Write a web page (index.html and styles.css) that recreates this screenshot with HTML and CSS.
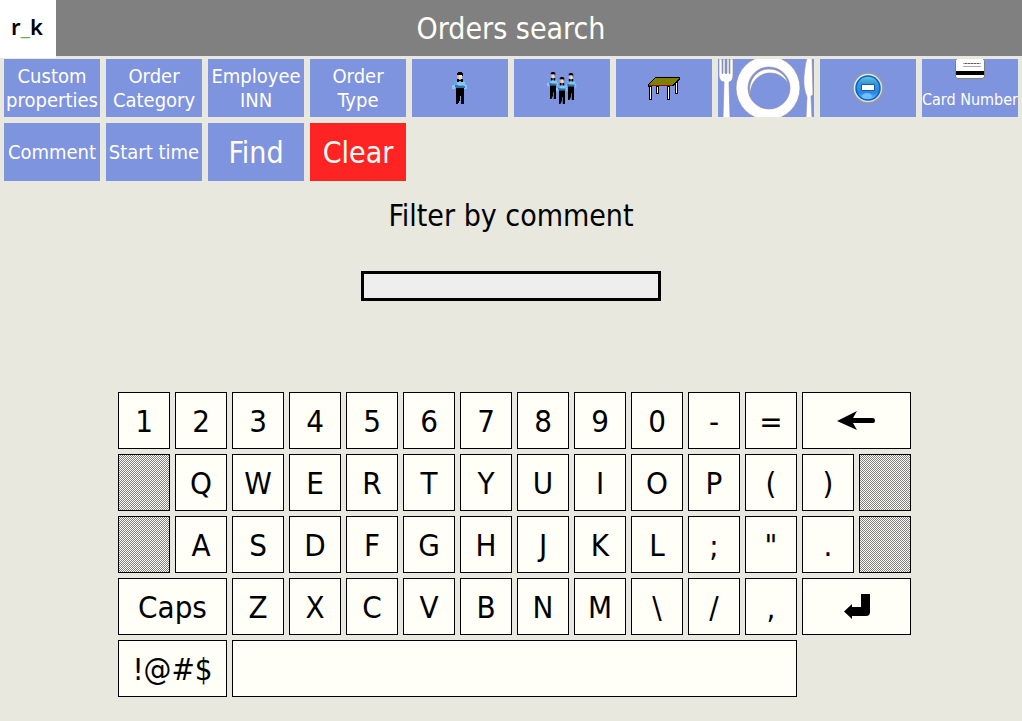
FILE: index.html
```html
<!DOCTYPE html>
<html lang="en">
<head>
    <meta charset="UTF-8">
    <title>Orders search</title>
    <link rel="stylesheet" href="styles.css">
</head>
<body>
    <header class="header">
        <div class="logo">r<span>_</span>k</div>
        <h1>Orders search</h1>
    </header>

    <div class="filters">
        <button>Custom properties</button>
        <button>Order Category</button>
        <button>Employee INN</button>
        <button>Order<br>Type</button>
        <button aria-label="Waiter">
            <svg width="16" height="32" viewBox="0 0 16 32">
                <symbol id="waiter" viewBox="0 0 16 32" preserveAspectRatio="none">
                    <path fill="#000" d="M6 0h4v1h1v3h-1v-1h-5v-2h1z"/>
                    <path fill="#e8b088" d="M5 3h2v4h-1v-1h-1z"/>
                    <path fill="#ffe0b8" d="M7 3h3v4h-3z"/>
                    <path fill="#68a8e0" d="M3 7h10v2h1v4h1v4h-2v-1h-10v1h-2v-4h1v-4h1z"/>
                    <path fill="#88c8f8" d="M0 13h3v4h-3zM12 13h3v4h-3zM5 10h8v3h-8z"/>
                    <path fill="#3870a8" d="M3 13h3v1h7v2h-9v-1h-1z"/>
                    <path fill="#000" d="M5 7h2v1h2v-1h2v3h-2v-1h-2v1h-2z"/>
                    <path fill="#000" d="M4 16h8v16h-3v-8h-1v5h-1v2h-1v1h-2z"/>
                </symbol>
                <use href="#waiter" width="16" height="32"/>
            </svg>
        </button>
        <button aria-label="Waiters">
            <svg width="30" height="32" viewBox="0 0 30 32">
                <use href="#waiter" x="0" y="0" width="12" height="27"/>
                <use href="#waiter" x="18" y="1" width="12" height="27"/>
                <use href="#waiter" x="9" y="5" width="12" height="27"/>
            </svg>
        </button>
        <button aria-label="Table">
            <svg width="32" height="23" viewBox="0 0 32 23" shape-rendering="crispEdges">
                <path fill="#000" d="M1 9h3v14h-3zM8 9h3v8h-3zM19 9h3v14h-3zM27 4h3v13h-3z"/>
                <path fill="#fff" d="M2 10h1v12h-1zM9 10h1v6h-1zM20 10h1v12h-1zM28 5h1v11h-1z"/>
                <path fill="#000" d="M7 0h25v2l-7 7h-24v1h-1v-3z"/>
                <path fill="#808000" d="M7 1h24l-7 7h-23z"/>
                <path fill="#a00000" d="M1 8h23v1h-23z"/>
            </svg>
        </button>
        <button aria-label="Dish">
            <svg width="96" height="58" viewBox="0 0 96 58">
                <g fill="#fff" stroke="#8c8c94" stroke-width="0.6">
                    <path d="M1 0h3v14q1 2 1 0V0h2v14q1 2 2 0V0h2v14q1 2 1 0V0h3v16q0 6-4 7l1 36H5l1-36q-5-1-5-7z"/>
                    <path fill-rule="evenodd" d="M18 29a32 32 0 1 1 64 0a32 32 0 1 1-64 0zM30 29a21 21 0 1 0 42 0a21 21 0 1 0-42 0z"/>
                    <path d="M32 37C29 21 39 10 51 10c9 0 17 6 19 14c-5-7-11-10-18-10C41 14 32 23 32 37z"/>
                    <path d="M89-1h5l1 37-2 1 1 22h-6l1-21q-4-9-3-21 1-12 3-18z"/>
                </g>
            </svg>
        </button>
        <button aria-label="Remove">
            <svg width="32" height="32" viewBox="0 0 32 32">
                <defs>
                    <linearGradient id="disc" x1="0" y1="0" x2="0" y2="1">
                        <stop offset="0" stop-color="#68c8d8"/>
                        <stop offset="0.3" stop-color="#3898d8"/>
                        <stop offset="0.7" stop-color="#2888e0"/>
                        <stop offset="1" stop-color="#70c8ff"/>
                    </linearGradient>
                    <linearGradient id="rim" x1="0" y1="0" x2="1" y2="1">
                        <stop offset="0" stop-color="#d0f8ff"/>
                        <stop offset="1" stop-color="#d8d4cc"/>
                    </linearGradient>
                </defs>
                <circle cx="16" cy="16" r="15" fill="url(#rim)" stroke="#98989c" stroke-width="1.5"/>
                <circle cx="16" cy="16" r="12" fill="url(#disc)" stroke="#0860d0" stroke-width="1.5"/>
                <ellipse cx="15" cy="24" rx="5" ry="3" fill="#70c0ff"/>
                <path d="M9.500 12.500h13v6h-13z" fill="#fff" stroke="#1858b8"/>
            </svg>
        </button>
        <button class="card">
            <svg width="30" height="20" viewBox="0 0 30 20" shape-rendering="crispEdges">
                <path fill="#fff" d="M1 1h1v-1h26v1h1v17h-1v1h-26v-1h-1z"/>
                <path d="M8 4.500h18M8 7.500h18" stroke="#a8a8a8"/>
                <path d="M10 4.500h14" stroke="#606060" stroke-dasharray="2 1"/>
                <path d="M1 12h28v4h-28z"/>
                <path d="M2 19.500h26M.5 2v16M29.500 2v16" fill="none" stroke="#808080"/>
            </svg>
            <span>Card Number</span>
        </button>
        <button>Comment</button>
        <button>Start time</button>
        <button class="big">Find</button>
        <button class="big clear">Clear</button>
    </div>

    <main>
        <div class="search">
            <label for="comment">Filter by comment</label>
            <input type="text" id="comment">
        </div>

        <div class="keyboard">
            <button>1</button>
            <button>2</button>
            <button>3</button>
            <button>4</button>
            <button>5</button>
            <button>6</button>
            <button>7</button>
            <button>8</button>
            <button>9</button>
            <button>0</button>
            <button>-</button>
            <button>=</button>
            <button class="wide" aria-label="Backspace">
                <svg width="40" height="20" viewBox="0 0 40 20">
                    <path d="M0 10L20 0l-4 7h20q2 0 2 2.500t-2 2.500H16l4 7z"/>
                </svg>
            </button>

            <button class="off" disabled></button>
            <button>Q</button>
            <button>W</button>
            <button>E</button>
            <button>R</button>
            <button>T</button>
            <button>Y</button>
            <button>U</button>
            <button>I</button>
            <button>O</button>
            <button>P</button>
            <button>(</button>
            <button>)</button>
            <button class="off" disabled></button>

            <button class="off" disabled></button>
            <button>A</button>
            <button>S</button>
            <button>D</button>
            <button>F</button>
            <button>G</button>
            <button>H</button>
            <button>J</button>
            <button>K</button>
            <button>L</button>
            <button>;</button>
            <button>"</button>
            <button>.</button>
            <button class="off" disabled></button>

            <button class="wide">Caps</button>
            <button>Z</button>
            <button>X</button>
            <button>C</button>
            <button>V</button>
            <button>B</button>
            <button>N</button>
            <button>M</button>
            <button>\</button>
            <button>/</button>
            <button>,</button>
            <button class="wide" aria-label="Enter">
                <svg width="26" height="25" viewBox="0 0 26 25">
                    <path d="M17 0h9v18q0 4-4 4H8v3L0 17.500 8 10v3h9z"/>
                </svg>
            </button>

            <button class="wide">!@#$</button>
            <button class="space" aria-label="Space"></button>
        </div>
    </main>
</body>
</html>
```

FILE: styles.css
```css
* {
    box-sizing: border-box;
}

body {
    margin: 0;
    background-color: #e8e8df;
    font-family: Tahoma, "DejaVu Sans Condensed", "Noto Sans", sans-serif;
    color: #000;
}

button {
    display: flex;
    align-items: center;
    justify-content: center;
    margin: 0;
    padding: 0;
    border: none;
    font-family: inherit;
    cursor: pointer;
}

svg {
    display: block;
    flex-shrink: 0;
}

.header {
    display: grid;
    grid-template-columns: 56px 1fr 56px;
    height: 56px;
    background-color: #808080;
}

.header h1 {
    margin: 0;
    font-size: 30px;
    font-weight: normal;
    line-height: 58px;
    text-align: center;
    color: #fffff8;
}

.logo {
    padding-right: 2px;
    background-color: #fff;
    font-family: "Noto Sans", sans-serif;
    font-size: 22px;
    font-weight: 600;
    line-height: 52px;
    text-align: center;
}

.logo span {
    color: #6ab04c;
}

/* filter buttons */
.filters {
    display: grid;
    grid-template-columns: repeat(10, 1fr);
    grid-auto-rows: 58px;
    gap: 6px;
    padding: 3px 4px;
}

.filters button {
    min-width: 0;
    overflow: hidden;
    background-color: #7f94df;
    color: #fffff8;
    font-size: 20px;
    line-height: 24px;
}

.filters .big {
    padding-top: 2px;
    font-size: 30px;
}

.filters .clear {
    background-color: #ff2424;
}

.filters .card {
    flex-direction: column;
    justify-content: flex-start;
    font-size: 16px;
    line-height: 42px;
    white-space: nowrap;
}

.search {
    display: flex;
    flex-direction: column;
    align-items: center;
    gap: 35px;
    padding-top: 12px;
}

.search label {
    font-size: 30px;
    line-height: 40px;
}

.search input {
    width: 300px;
    height: 30px;
    padding: 0 4px;
    border: 3px solid #000;
    background-color: #eee;
    font-family: inherit;
    font-size: 20px;
}

/* on-screen keyboard */
.keyboard {
    display: grid;
    grid-template-columns: repeat(14, 1fr);
    grid-auto-rows: 57px;
    gap: 5px;
    margin: 91px 111px 24px 118px;
}

.keyboard button {
    min-width: 0;
    border: 1px solid #000;
    background-color: #fffff8;
    color: #000;
    font-size: 31px;
}

.keyboard .wide {
    grid-column: span 2;
}

.keyboard .space {
    grid-column: span 10;
}

.keyboard .off {
    background: repeating-conic-gradient(#808080 0 25%, #fffff8 0 50%) 0 0 / 2px 2px;
}
```
